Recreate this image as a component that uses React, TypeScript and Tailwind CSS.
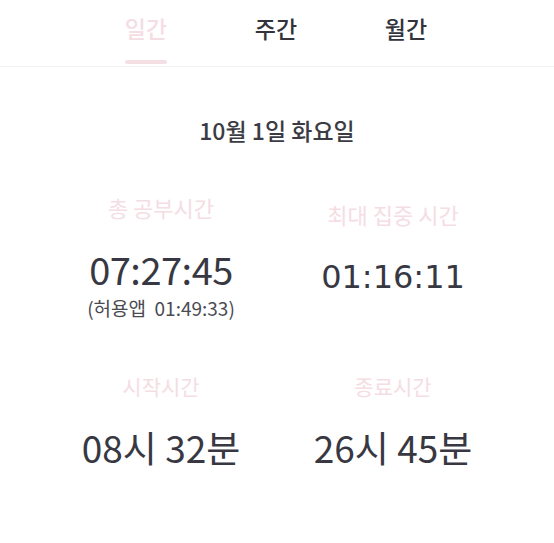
import React from "react";

const ko = { fontFamily: '"Noto Sans CJK KR", "Noto Sans", sans-serif' };

export default function App() {
  const tabs = ["일간", "주간", "월간"];
  return (
    <div
      className="w-[554px] h-[543px] bg-white overflow-hidden"
      style={ko}
    >
      <div className="flex h-[67px] border-b border-[#f2f2f2] pl-[81px]">
        {tabs.map((t, i) => (
          <div key={t} className="w-[130px] flex flex-col items-center justify-between">
            <div
              className={`pt-[13px] text-[23px] leading-[30px] font-medium ${
                i === 0 ? "text-[#f4dde3]" : "text-[#33333b]"
              }`}
            >
              {t}
            </div>
            <div
              className={`w-[42px] h-[4px] mb-[2px] rounded-sm ${
                i === 0 ? "bg-[#f4dfe5]" : "bg-transparent"
              }`}
            />
          </div>
        ))}
      </div>

      <div className="flex justify-center pt-[48px]">
        <div className="text-[23px] leading-[30px] font-medium text-[#3b3b44]">
          10월 1일 화요일
        </div>
      </div>

      <div className="grid grid-cols-2 px-[45px] pt-[47px]">
        <div className="flex flex-col items-center">
          <div className="text-[22px] leading-[30px] text-[#f5dde4]">총 공부시간</div>
          <div className="mt-[25px] text-[38px] leading-[44px] text-[#383842] tracking-[-0.5px]">
            07:27:45
          </div>
          <div className="mt-[4px] text-[19px] leading-[26px] text-[#4a4a52]">
            (허용앱&nbsp;&nbsp;01:49:33)
          </div>
        </div>
        <div className="flex flex-col items-center pt-[7px]">
          <div className="text-[22px] leading-[30px] text-[#f5dde4]">최대 집중 시간</div>
          <div
            className="mt-[28px] text-[32px] leading-[40px] text-[#383842]"
            style={{ fontFamily: '"DejaVu Sans", sans-serif' }}
          >
            01:16:11
          </div>
        </div>
      </div>

      <div className="grid grid-cols-2 px-[45px] pt-[50px]">
        <div className="flex flex-col items-center">
          <div className="text-[21px] leading-[30px] text-[#f5dde4]">시작시간</div>
          <div className="mt-[23px] text-[37px] leading-[46px] text-[#383842]">08시 32분</div>
        </div>
        <div className="flex flex-col items-center">
          <div className="text-[21px] leading-[30px] text-[#f5dde4]">종료시간</div>
          <div className="mt-[23px] text-[37px] leading-[46px] text-[#383842]">26시 45분</div>
        </div>
      </div>
    </div>
  );
}
